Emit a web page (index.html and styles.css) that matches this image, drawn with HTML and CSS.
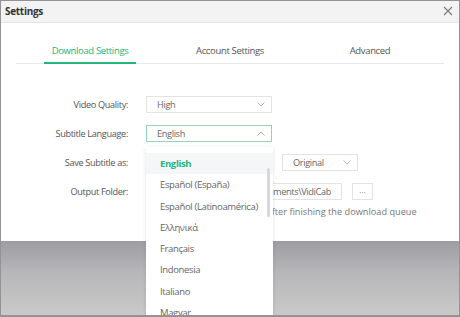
FILE: index.html
```html
<!DOCTYPE html>
<html lang="en">
  <head>
    <meta charset="UTF-8" />
    <meta name="viewport" content="width=device-width, initial-scale=1.0" />
    <title>Settings</title>
    <link rel="stylesheet" href="styles.css">
  </head>
  <body>
    <div class="window">
      <header class="titlebar">
        <span class="title">Settings</span>
        <svg class="close" width="10" height="10" viewBox="0 0 10 10">
          <path d="M1 1 L9 9 M9 1 L1 9" stroke="#7a7a7a" stroke-width="1.1" fill="none" />
        </svg>
      </header>

      <section class="dialog">
        <nav class="tabs">
          <div class="tab-cell"><span class="tab active">Download Settings</span></div>
          <div class="tab-cell"><span class="tab">Account Settings</span></div>
          <div class="tab-cell"><span class="tab">Advanced</span></div>
        </nav>

        <div class="form">
          <label class="label">Video Quality:</label>
          <div class="control">
            <div class="select wide">
              <span>High</span>
              <svg class="chev" width="8" height="5" viewBox="0 0 8 5"><path d="M0.5 0.5 L4 4 L7.5 0.5" stroke="#bbb" fill="none" /></svg>
            </div>
          </div>

          <label class="label">Subtitle Language:</label>
          <div class="control">
            <div class="select wide open">
              <span>English</span>
              <svg class="chev" width="8" height="5" viewBox="0 0 8 5"><path d="M0.5 4.5 L4 1 L7.5 4.5" stroke="#aaa" fill="none" /></svg>
            </div>
          </div>

          <label class="label">Save Subtitle as:</label>
          <div class="control">
            <div class="select mid">
              <span>SRT</span>
            </div>
            <div class="select small">
              <span>Original</span>
              <svg class="chev" width="8" height="5" viewBox="0 0 8 5"><path d="M0.5 0.5 L4 4 L7.5 0.5" stroke="#bbb" fill="none" /></svg>
            </div>
          </div>

          <label class="label">Output Folder:</label>
          <div class="control">
            <div class="input"><span>C:\Users\Admin\Documents\VidiCab</span></div>
            <button class="more">···</button>
          </div>

          <span></span>
          <div class="control check">
            <span class="box"></span>
            <span class="note">Open the output folder after finishing the download queue</span>
          </div>
        </div>
      </section>

      <div class="backdrop"></div>

      <ul class="dropdown">
        <li class="selected">English</li>
        <li>Español (España)</li>
        <li>Español (Latinoamérica)</li>
        <li>Ελληνικά</li>
        <li>Français</li>
        <li>Indonesia</li>
        <li>Italiano</li>
        <li>Magyar</li>
        <li>Nederlands</li>
      </ul>
      <div class="scrollbar"></div>
    </div>
  </body>
</html>
```

FILE: styles.css
```css
*,
*::after,
*::before {
  box-sizing: border-box;
}

body {
  margin: 0;
  font-family: "Open Sans", "Liberation Sans", sans-serif;
  color: #555;
}

.window {
  position: relative;
  width: 460px;
  height: 317px;
  border: 1px solid #939393;
  border-bottom-width: 2px;
  display: flex;
  flex-direction: column;
  overflow: hidden;
  background: #fff;
}

/* barra de titulo */
.titlebar {
  height: 22px;
  background: #f3f3f3;
  border-bottom: 1px solid #e4e4e4;
  display: flex;
  align-items: center;
  justify-content: space-between;
  padding: 0 6px 2px 4px;
}

.title {
  font-weight: 700;
  font-size: 10px;
  letter-spacing: -0.3px;
  color: #333;
}

.close {
  display: block;
}

.dialog {
  height: 218px;
  background: #fff;
  padding-top: 14px;
}

/* pestañas */
.tabs {
  display: flex;
  margin: 0 15px;
  padding: 0 4px;
  border-bottom: 1px solid #e8e8e8;
}

.tab-cell {
  flex: 1;
  text-align: center;
}

.tab {
  display: inline-block;
  font-size: 9.5px;
  letter-spacing: -0.35px;
  line-height: 14px;
  padding: 3px 8px 4px;
  color: #555;
  border-bottom: 2px solid transparent;
  margin-bottom: -1px;
}

.tab.active {
  color: #25b47a;
  border-bottom-color: #25b47a;
}

/* formulario */
.form {
  display: grid;
  grid-template-columns: 127px 1fr;
  column-gap: 18px;
  row-gap: 12px;
  margin-top: 32px;
  font-size: 9.2px;
  letter-spacing: -0.35px;
}

.label {
  text-align: right;
  line-height: 17px;
  color: #555;
}

.control {
  display: flex;
  align-items: center;
  gap: 10px;
  height: 17px;
}

.select {
  height: 17px;
  border: 1px solid #e3e3e3;
  display: flex;
  align-items: center;
  justify-content: space-between;
  padding: 0 6px 0 10px;
  color: #666;
}

.select.wide {
  width: 126px;
}

.select.open {
  border-color: #8fd4b6;
}

.select.mid {
  width: 126px;
}

.select.small {
  width: 76px;
}

.chev {
  display: block;
}

.input {
  width: 196px;
  height: 17px;
  border: 1px solid #e3e3e3;
  display: flex;
  align-items: center;
  justify-content: flex-end;
  overflow: hidden;
  padding-right: 10px;
  color: #666;
  white-space: nowrap;
}

.more {
  width: 21px;
  height: 17px;
  border: 1px solid #e3e3e3;
  background: #fff;
  color: #777;
  font-size: 8px;
  padding: 0;
  font-family: inherit;
}

.check {
  gap: 9px;
  margin-top: -9px;
}

.box {
  width: 10px;
  height: 10px;
  border: 1px solid #ccc;
}

.note {
  white-space: nowrap;
  font-size: 9.2px;
  letter-spacing: 0;
  color: #777;
}

/* fondo gris de la ventana de atras */
.backdrop {
  flex: 1;
  background: linear-gradient(#9d9da3, #b8b8ba 45%, #c9c9c9);
}

/* lista desplegable */
.dropdown {
  position: absolute;
  left: 145px;
  top: 146px;
  width: 127px;
  margin: 0;
  padding: 6px 0 0;
  list-style: none;
  background: #fff;
  box-shadow: 0 1px 4px rgba(0, 0, 0, 0.12);
  font-size: 9.5px;
  letter-spacing: -0.35px;
  color: #666;
}

.dropdown li {
  height: 21.3px;
  line-height: 21.3px;
  padding-left: 14px;
  white-space: nowrap;
}

.dropdown li.selected {
  background: #f5f6f8;
  color: #25b47a;
  font-weight: 700;
}

.scrollbar {
  position: absolute;
  left: 266px;
  top: 167px;
  width: 3px;
  height: 49px;
  border-radius: 2px;
  background: #d8d8d8;
}
```
